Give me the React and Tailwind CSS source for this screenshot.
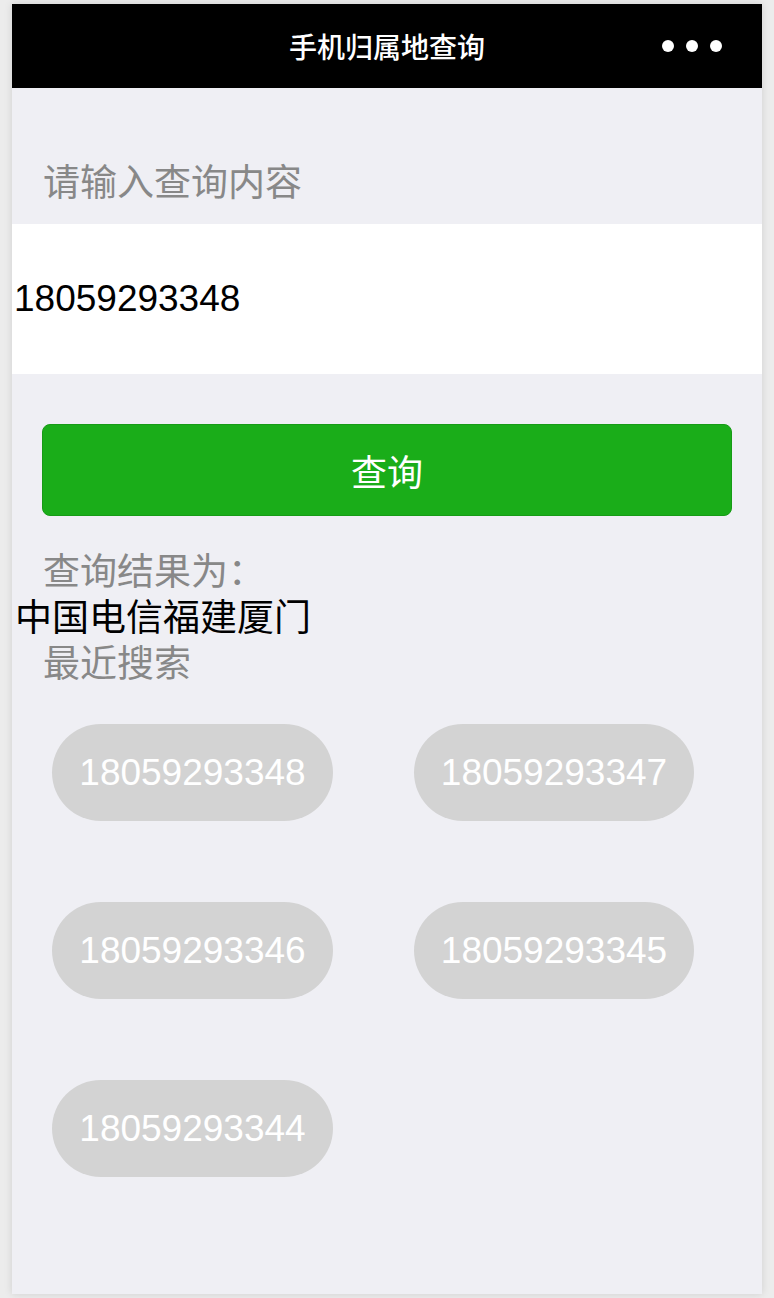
import React from 'react';

const cjk = { fontFamily: '"Noto Sans CJK SC", "Liberation Sans", sans-serif' };
const num = { fontFamily: '"Liberation Sans", Arial, sans-serif' };

const recent = ['18059293348', '18059293347', '18059293346', '18059293345', '18059293344'];

export default function App() {
  return (
    <div className="min-h-[1298px] bg-[#ececec] px-[12px] pt-[4px] pb-[4px]">
      <div className="w-[750px] h-[1290px] bg-[#efeff4] shadow-[0_0_8px_rgba(0,0,0,0.12)]">
        {/* nav bar */}
        <div className="relative h-[84px] bg-black flex items-center justify-center">
          <span className="text-white text-[28px] font-medium leading-none" style={cjk}>手机归属地查询</span>
          <div className="absolute right-[40px] top-[36px] flex gap-[12px]">
            <span className="w-[12px] h-[12px] rounded-full bg-white"></span>
            <span className="w-[12px] h-[12px] rounded-full bg-white"></span>
            <span className="w-[12px] h-[12px] rounded-full bg-white"></span>
          </div>
        </div>

        <div className="pt-[69px] pl-[31px] text-[37px] leading-[46px] text-[#888888]" style={cjk}>请输入查询内容</div>

        <div className="mt-[21px] h-[150px] bg-white flex items-center pl-[2px]">
          <span className="text-[37px] text-black" style={num}>18059293348</span>
        </div>

        <div className="px-[30px] mt-[50px]">
          <button className="w-full h-[92px] bg-[#1aad19] border border-[#179b16] rounded-[8px] flex items-center justify-center text-white text-[36px]" style={cjk}>
            查询
          </button>
        </div>

        {/* result */}
        <div className="mt-[30px] text-[37px] leading-[46px]" style={cjk}>
          <div className="pl-[31px] text-[#888888]">查询结果为：</div>
          <div className="pl-[3px] text-black">中国电信福建厦门</div>
          <div className="pl-[31px] text-[#888888]">最近搜索</div>
        </div>

        <div className="mt-[40px] pl-[40px] grid grid-cols-[281px_280px] gap-x-[81px] gap-y-[81px]">
          {recent.map((n) => (
            <div key={n} className="h-[97px] rounded-full bg-[#d3d3d3] flex items-center justify-center text-white text-[37px]" style={num}>
              {n}
            </div>
          ))}
        </div>
      </div>
    </div>
  );
}
